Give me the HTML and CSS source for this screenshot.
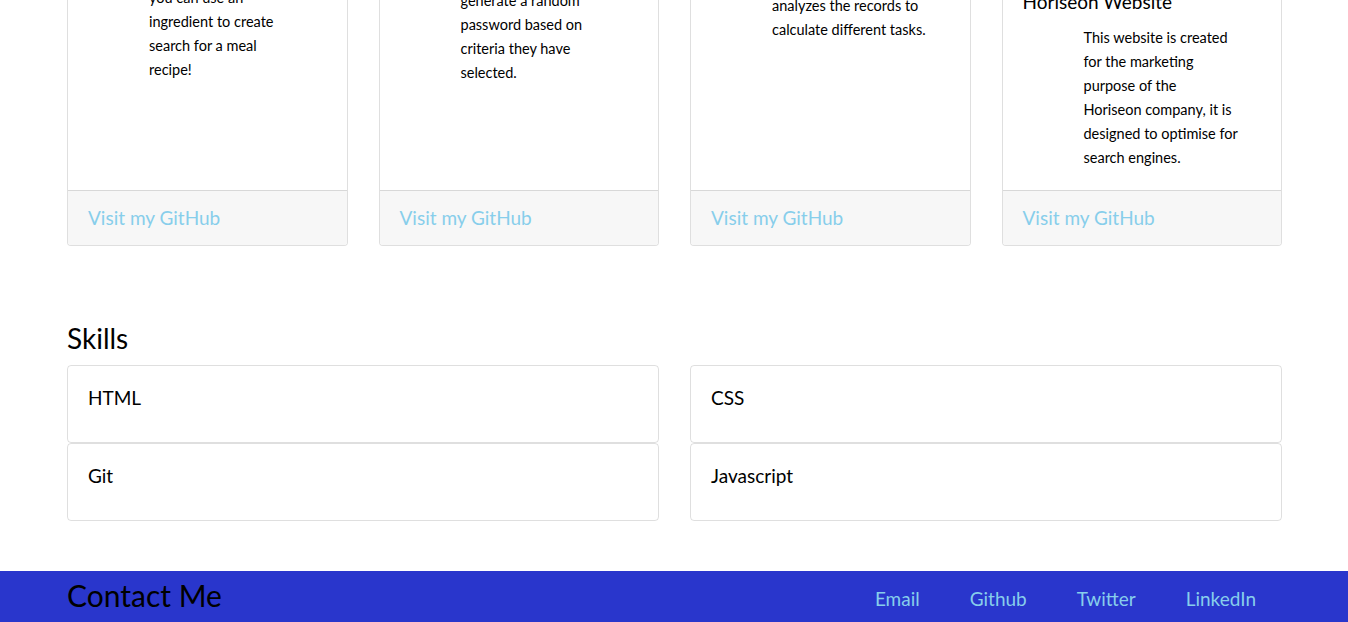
FILE: index.html
```html
<!DOCTYPE html>
<html lang="en">
<head>
<meta charset="utf-8">
<title>Portfolio</title>
<link rel="stylesheet" href="styles.css">
</head>
<body>
<div class="page">
  <section class="projects">
    <article class="card">
      <div class="card-body shift-a">
        <p class="card-text">you can use an<br>ingredient to create<br>search for a meal<br>recipe!</p>
      </div>
      <div class="card-footer"><a href="#">Visit my GitHub</a></div>
    </article>
    <article class="card">
      <div class="card-body shift-b">
        <p class="card-text">generate a random<br>password based on<br>criteria they have<br>selected.</p>
      </div>
      <div class="card-footer"><a href="#">Visit my GitHub</a></div>
    </article>
    <article class="card">
      <div class="card-body shift-c">
        <p class="card-text">analyzes the records to<br>calculate different tasks.</p>
      </div>
      <div class="card-footer"><a href="#">Visit my GitHub</a></div>
    </article>
    <article class="card">
      <div class="card-body">
        <h5 class="card-title">Horiseon Website</h5>
        <p class="card-text">This website is created<br>for the marketing<br>purpose of the<br>Horiseon company, it is<br>designed to optimise for<br>search engines.</p>
      </div>
      <div class="card-footer"><a href="#">Visit my GitHub</a></div>
    </article>
  </section>

  <section class="skills">
    <h3 class="section-title">Skills</h3>
    <div class="skill-grid">
      <div class="skill"><h5>HTML</h5></div>
      <div class="skill"><h5>CSS</h5></div>
      <div class="skill"><h5>Git</h5></div>
      <div class="skill"><h5>Javascript</h5></div>
    </div>
  </section>

  <footer class="contact">
    <h2 class="contact-title">Contact Me</h2>
    <nav class="contact-links">
      <a href="#">Email</a>
      <a href="#">Github</a>
      <a href="#">Twitter</a>
      <a href="#">LinkedIn</a>
    </nav>
  </footer>
</div>
</body>
</html>
```

FILE: styles.css
```css
* { box-sizing: border-box; }

html, body {
  margin: 0;
  height: 100%;
}

body {
  font-family: Lato, "Liberation Sans", sans-serif;
  color: #000;
  background: #fff;
  overflow: hidden;
}

a { text-decoration: none; color: #87ceeb; }

.page {
  height: 622px;
  overflow: hidden;
  display: flex;
  flex-direction: column;
  justify-content: flex-end;
}

/* Projects */
.projects {
  flex-shrink: 0;
  display: grid;
  grid-template-columns: repeat(4, 1fr);
  column-gap: 31px;
  padding: 0 66px 0 67px;
  margin-bottom: 77px;
}

.card {
  display: flex;
  flex-direction: column;
  border: 1px solid rgba(0, 0, 0, 0.125);
  border-radius: 4px;
  background: #fff;
  overflow: hidden;
}

.card-body {
  flex: 1;
  padding: 20px;
}

.card-body.shift-a { padding-top: 16px; }
.card-body.shift-b { padding-top: 19px; }
.card-body.shift-c { padding-top: 24px; }

.card-title {
  margin: 0 0 12px;
  font-size: 19px;
  font-weight: 400;
  line-height: 24px;
}

.card-text {
  margin: 0 0 0 61px;
  font-size: 14.5px;
  line-height: 24px;
}

.card-footer {
  background: #f7f7f7;
  border-top: 1px solid rgba(0, 0, 0, 0.125);
  padding: 12px 20px;
  font-size: 19px;
  line-height: 30px;
}

/* Skills */
.skills {
  flex-shrink: 0;
  padding: 0 66px 0 67px;
  margin-bottom: 50px;
}

.section-title {
  margin: 0 0 11px;
  font-size: 28px;
  font-weight: 400;
  line-height: 31px;
}

.skill-grid {
  display: grid;
  grid-template-columns: 1fr 1fr;
  column-gap: 31px;
}

.skill {
  border: 1px solid rgba(0, 0, 0, 0.125);
  border-radius: 4px;
  padding: 20px;
}

.skill h5 {
  margin: 0 0 12px;
  font-size: 19px;
  font-weight: 400;
  line-height: 24px;
}

/* Contact footer */
.contact {
  flex-shrink: 0;
  height: 51px;
  background: #2936cc;
  display: flex;
  justify-content: space-between;
  align-items: flex-start;
  padding: 0 67px;
}

.contact-title {
  margin: 6px 0 0;
  font-size: 30px;
  font-weight: 400;
  line-height: 36px;
  color: #000;
}

.contact-links {
  display: flex;
  padding-top: 14px;
}

.contact-links a {
  padding: 0 25px;
  font-size: 19px;
  line-height: 28px;
}
```
